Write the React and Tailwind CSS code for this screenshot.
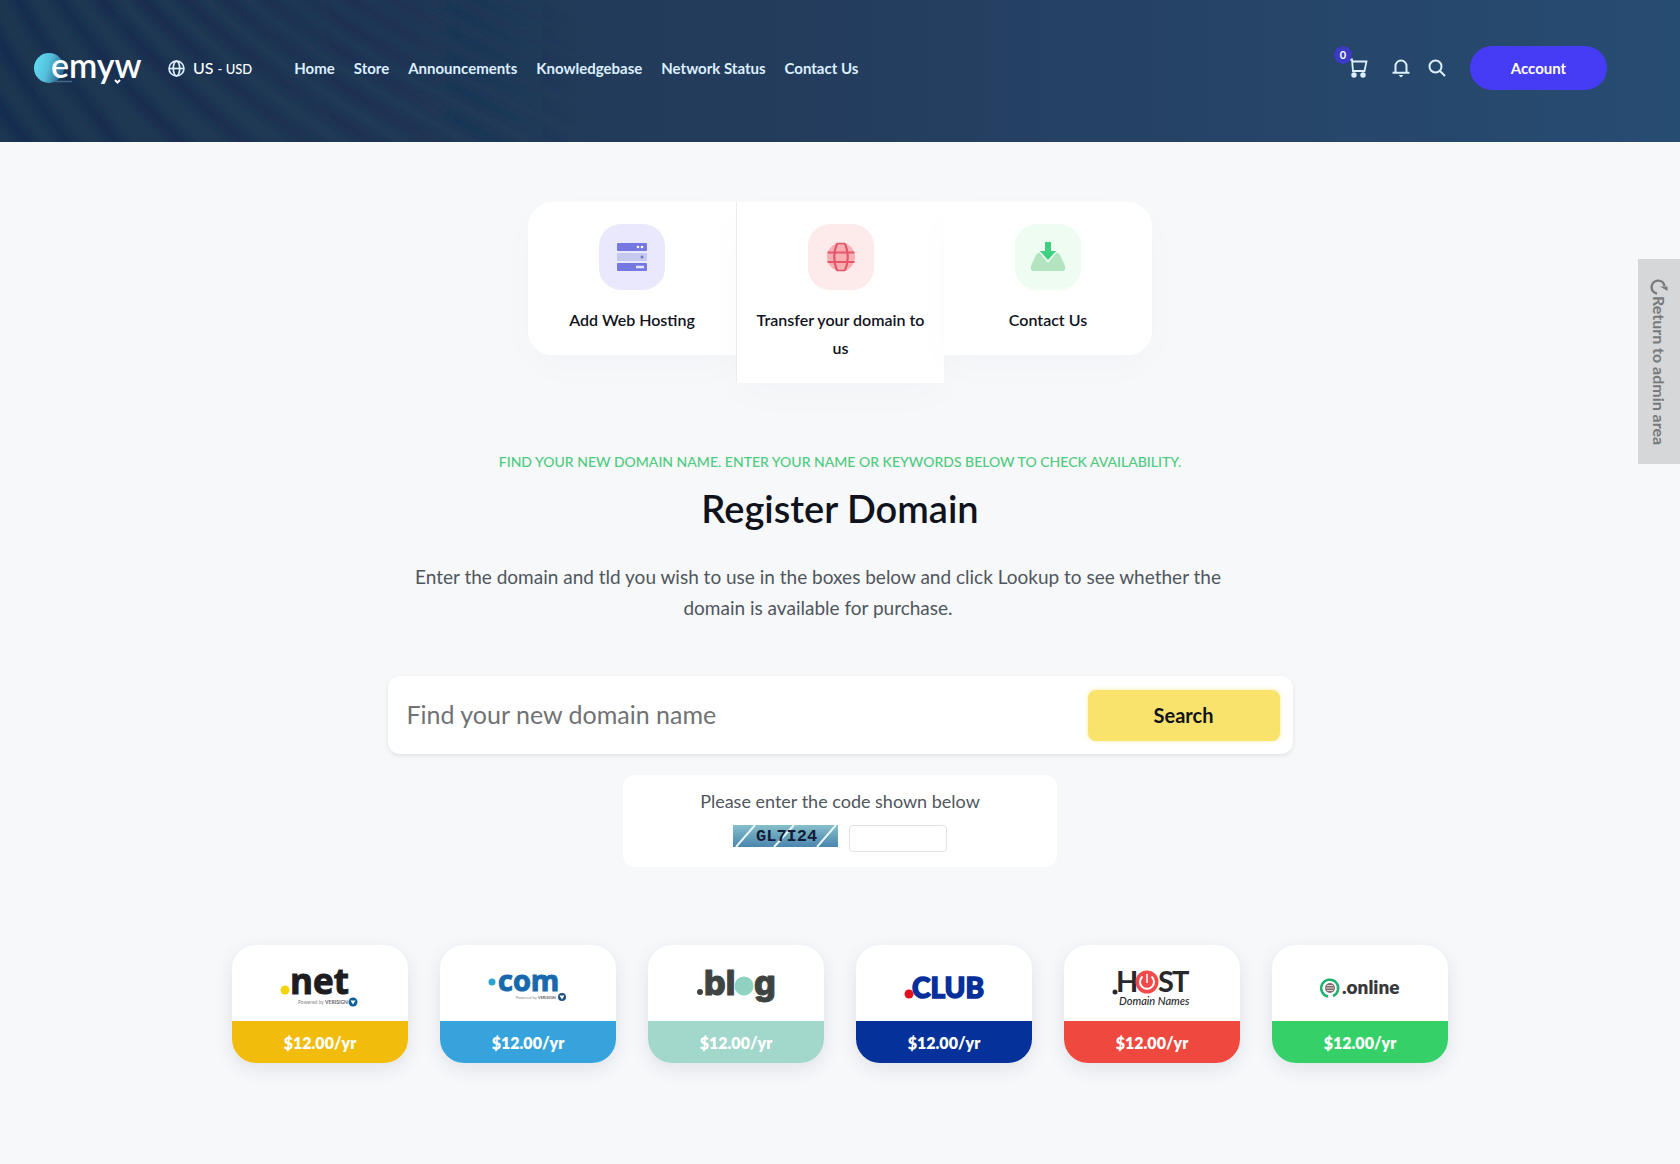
import React from 'react';

const navItems = ['Home', 'Store', 'Announcements', 'Knowledgebase', 'Network Status', 'Contact Us'];

const bands = Array.from({ length: 18 }, (_, i) => {
  const x = -190 + i * 41;
  const run = 100 + Math.max(0, x) * 0.6;
  return `M${x} -6 Q${x + run * 0.42} ${78} ${x + run} 150`;
});

function HeaderBackdrop() {
  return (
    <svg className="absolute inset-0 h-full w-full" aria-hidden="true">
      <defs>
        <linearGradient id="fade" x1="0" x2="580" y1="0" y2="0" gradientUnits="userSpaceOnUse">
          <stop offset="0" stopColor="#12284f" stopOpacity="0.75" />
          <stop offset="0.7" stopColor="#12284f" stopOpacity="0.4" />
          <stop offset="1" stopColor="#12284f" stopOpacity="0" />
        </linearGradient>
        <filter id="soft"><feGaussianBlur stdDeviation="3" /></filter>
      </defs>
      <g filter="url(#soft)" fill="none" stroke="url(#fade)" strokeWidth="13">
        {bands.map((d) => <path key={d} d={d} />)}
      </g>
    </svg>
  );
}

function Logo() {
  return (
    <svg className="block" width="110" height="56" viewBox="0 0 110 56" role="img" aria-label="emyw">
      <defs>
        <linearGradient id="disc" x1="0" x2="1" y1="0" y2="0.3">
          <stop offset="0" stopColor="#62e2f2" />
          <stop offset="0.55" stopColor="#56bfdc" />
          <stop offset="1" stopColor="#2c6f96" />
        </linearGradient>
      </defs>
      <circle cx="15" cy="28" r="15" fill="url(#disc)" />
      <path d="M20 41.500H38" stroke="#47688a" strokeWidth="1.500" />
      <text x="17" y="38" fontFamily="Lato, sans-serif" fontSize="34" fontWeight="600" fill="#fff">emyw</text>
      <path d="M81 40l2.500 2.500 2.500-2.500" fill="none" stroke="#fff" strokeWidth="2" />
    </svg>
  );
}

const line = { fill: 'none', stroke: 'currentColor', strokeWidth: 1.8 };

function GlobeIcon() {
  return (
    <svg width="17" height="17" viewBox="0 0 16 16" aria-hidden="true" {...line} strokeWidth="1.600">
      <circle cx="8" cy="8" r="7" />
      <ellipse cx="8" cy="8" rx="3" ry="7" />
      <path d="M1 8h14" />
    </svg>
  );
}

function CartIcon() {
  return (
    <svg width="18" height="20" viewBox="0 0 18 20" aria-hidden="true" {...line}>
      <path d="M0 1.500h2l1 11.500h11.500L16.500 3.500H2.500" />
      <circle cx="4" cy="17" r="1.800" fill="currentColor" />
      <circle cx="13" cy="17" r="1.800" fill="currentColor" />
    </svg>
  );
}

function BellIcon() {
  return (
    <svg width="18" height="19" viewBox="0 0 18 19" aria-hidden="true" {...line} strokeWidth="2">
      <path d="M0.500 13.800h17M3.500 13.500V7a5.500 5.500 0 0 1 11 0v6.500" />
      <path d="M6.500 16h5l-2.500 2.500z" fill="currentColor" stroke="none" />
    </svg>
  );
}

function SearchIcon() {
  return (
    <svg width="18" height="18" viewBox="0 0 18 18" aria-hidden="true" {...line} strokeWidth="2">
      <circle cx="7.500" cy="7.500" r="6" />
      <path d="M12 12l5 5" />
    </svg>
  );
}

function ServerArt() {
  return (
    <svg width="30" height="28" viewBox="0 0 30 28" aria-hidden="true">
      <rect width="30" height="8" rx="1" fill="#7478e0" />
      <rect y="10" width="30" height="8" rx="1" fill="#c6c9ee" />
      <rect y="20" width="30" height="8" rx="1" fill="#7478e0" />
      <circle cx="21" cy="4" r="1.300" fill="#fff" /><circle cx="25" cy="4" r="1.300" fill="#fff" />
      <circle cx="25" cy="14" r="1.500" fill="#7478c8" />
      <path d="M19 24h8" stroke="#e6e7ff" strokeWidth="2.500" />
    </svg>
  );
}

function GlobeArt() {
  return (
    <svg width="30" height="30" viewBox="0 0 30 30" aria-hidden="true">
      <circle cx="15" cy="15" r="14" fill="#f9aeb2" />
      <g fill="none" stroke="#e5566a" strokeWidth="2.200">
        <path d="M1.500 10.500h27M1.500 20h27" />
        <path d="M11 1.500Q5.500 15 11 28.500M19 1.500Q24.500 15 19 28.500" />
        <path d="M11 1.500h8M11 28.500h8" strokeWidth="1.500" />
      </g>
    </svg>
  );
}

function InboxArt() {
  return (
    <svg width="36" height="30" viewBox="0 0 36 30" aria-hidden="true">
      <path d="M9 11h18q2 0 3 2l5 11q1 5-3 5H4q-4 0-3-5l5-11q1-2 3-2z" fill="#b3e3bf" />
      <path d="M9 10l9 11 9-11z" fill="#e7faec" />
      <path d="M15 0h6v9h5l-8 9-8-9h5z" fill="#3fcf80" />
    </svg>
  );
}

const tiles = [
  { label: 'Add Web Hosting', art: <ServerArt />, icon: 'bg-[#e9e8fd]', box: 'rounded-l-3xl' },
  { label: 'Transfer your domain to us', art: <GlobeArt />, icon: 'bg-[#fdeaea]', box: 'border-l border-[#eeecec]' },
  { label: 'Contact Us', art: <InboxArt />, icon: 'bg-[#eefcf2]', box: 'rounded-r-3xl' },
];

function Verisign({ x, y, r, size, color, start }) {
  return (
    <>
      <text x={start} y={y + 2} fontFamily="Lato, sans-serif" fontSize={size} fill="#8a8a8a">
        Powered by <tspan fontWeight="700" fill="#666">VERISIGN</tspan>
      </text>
      <circle cx={x} cy={y} r={r} fill={color} />
      <path d={`M${x - 2.5} ${y - 1.5}h5l-2.500 4z`} fill="#fff" />
    </>
  );
}

const tlds = [
  {
    name: '.net', bar: 'bg-[#f2bc0c]',
    art: (
      <>
        <circle cx="53" cy="45" r="4.500" fill="#f6d20a" />
        <text x="58" y="49" fontFamily="Open Sans, sans-serif" fontSize="35" fontWeight="700" fill="#1d1d1f" stroke="#1d1d1f">net</text>
        <Verisign start={66} x={121} y={57} r={4.5} size={5} color="#0d5f9c" />
      </>
    ),
  },
  {
    name: '.com', bar: 'bg-[#36a3dc]',
    art: (
      <>
        <circle cx="52" cy="37" r="3.500" fill="#29a5cf" />
        <text x="58" y="46" fontFamily="Open Sans, sans-serif" fontSize="29" fontWeight="700" fill="#1768ad" stroke="#1768ad">com</text>
        <Verisign start={76} x={122} y={52} r={4} size={4} color="#1c4f86" />
      </>
    ),
  },
  {
    name: '.blog', bar: 'bg-[#a1d8cb]',
    art: (
      <>
        <circle cx="52" cy="47" r="3" fill="#3e4442" />
        <g fontFamily="Inter, sans-serif" fontSize="34" fontWeight="800" fill="#3e4442" stroke="#3e4442" strokeLinejoin="round">
          <text x="56" y="50">bl</text>
          <text x="106" y="50">g</text>
        </g>
        <circle cx="96" cy="41" r="9.500" fill="#8fd2c2" />
      </>
    ),
  },
  {
    name: '.club', bar: 'bg-[#04329a]',
    art: (
      <>
        <circle cx="53" cy="49" r="4.500" fill="#e0101c" />
        <text x="56" y="53" fontFamily="Lato, sans-serif" fontSize="28" fontWeight="900" fill="#062f9b" stroke="#062f9b" strokeWidth="1.500">CLUB</text>
      </>
    ),
  },
  {
    name: '.host', bar: 'bg-[#ef483e]',
    art: (
      <>
        <circle cx="51" cy="47" r="2.500" fill="#26282b" />
        <g fontFamily="Lato, sans-serif" fontSize="29" fontWeight="700" fill="#26282b">
          <text x="52" y="47">H</text>
          <text x="94" y="47">S</text>
          <text x="108" y="47">T</text>
        </g>
        <circle cx="83" cy="37" r="11.500" fill="#f04a4a" />
        <path d="M78.500 31.500a7 7 0 1 0 9 0" fill="none" stroke="#fff" strokeWidth="2" />
        <path d="M83 29v9" fill="none" stroke="#fff" strokeWidth="1.500" />
        <text x="55" y="60" fontFamily="Lato, sans-serif" fontSize="11" fontWeight="500" fontStyle="italic" fill="#26282b">Domain Names</text>
      </>
    ),
  },
  {
    name: '.online', bar: 'bg-[#35d168]',
    art: (
      <>
        <path d="M56 51.500a8.500 8.500 0 1 1 5-0.500" fill="none" stroke="#20b070" strokeWidth="2.500" />
        <circle cx="58" cy="43" r="5" fill="#7d706f" />
        <path d="M54 43h8M55 40.500h6M55 45.500h6" stroke="#e2cccc" />
        <text x="70" y="49" fontFamily="Lato, sans-serif" fontSize="19" fontWeight="800" fill="#38383c">.online</text>
      </>
    ),
  },
];

export default function App() {
  return (
    <div className="min-h-screen bg-[#f6f8fa] font-['Lato',sans-serif] text-[#10131c]">
      <header className="relative bg-linear-to-r from-[#1d3650] via-[#243d5e] via-50% to-[#274c72]">
        <HeaderBackdrop />
        <div className="relative flex h-[142px] items-center pr-[73px] pl-[34px] pb-1.5 text-[#dcefff]">
          <a href="#home"><Logo /></a>
          <button type="button" className="ml-6 flex items-center gap-2">
            <GlobeIcon />
            <span className="text-base font-medium text-white">US <span className="text-[13px]">- USD</span></span>
          </button>
          <nav className="ml-[42px] flex gap-[19px] text-[15px] font-bold whitespace-nowrap">
            {navItems.map((item) => <a key={item} href="#nav">{item}</a>)}
          </nav>
          <div className="ml-auto flex items-center">
            <button type="button" aria-label="Cart" className="relative">
              <CartIcon />
              <span className="absolute -top-3 -left-4 flex size-[18px] items-center justify-center rounded-full bg-[#3b3bc4] text-[11px] font-bold text-white">0</span>
            </button>
            <button type="button" aria-label="Notifications" className="ml-6"><BellIcon /></button>
            <button type="button" aria-label="Search site" className="ml-[18px]"><SearchIcon /></button>
            <button type="button" className="ml-6 h-11 w-[137px] rounded-full bg-[#463cf5] text-[15px] font-bold text-white">Account</button>
          </div>
        </div>
      </header>

      <main className="flex flex-col items-center px-8 pt-[60px] pb-[98px]">
        <div className="grid w-full max-w-[624px] grid-cols-3 items-start">
          {tiles.map((t) => (
            <a key={t.label} href="#tile" className={`flex flex-col items-center bg-white px-3 pt-[22px] pb-[21px] text-center shadow-[0_12px_40px_rgba(40,60,90,0.02)] ${t.box}`}>
              <span className={`flex size-[66px] items-center justify-center rounded-[22px] ${t.icon}`}>{t.art}</span>
              <span className="mt-4 text-base leading-7 font-semibold">{t.label}</span>
            </a>
          ))}
        </div>

        <p className="mt-[67px] text-sm leading-6 font-medium text-[#4ecb7e] uppercase">
          Find your new domain name. Enter your name or keywords below to check availability.
        </p>
        <h1 className="mt-[10px] text-[38px] leading-12 font-semibold">Register Domain</h1>
        <p className="mt-[29px] w-full max-w-[906px] pr-11 text-center text-[19px] leading-[31px] text-[#50565c]">
          Enter the domain and tld you wish to use in the boxes below and click Lookup to see whether the domain is available for purchase.
        </p>

        <form className="mt-[53px] flex w-full flex-col items-center" onSubmit={(e) => e.preventDefault()}>
          <div className="flex h-[78px] w-full max-w-[905px] items-center rounded-xl bg-white pr-[13px] pl-[19px] shadow-[0_2px_4px_rgba(40,50,70,0.10)]">
            <input aria-label="Domain name" placeholder="Find your new domain name" className="min-w-0 flex-1 text-[25px] outline-none placeholder:text-[#707274]" />
            <button type="submit" className="h-[51px] w-[192px] rounded-lg bg-[#f9e36c] text-xl font-bold shadow-[0_0_4px_rgba(245,220,60,0.5)]">Search</button>
          </div>
          <div className="mt-[21px] flex h-[92px] w-full max-w-[434px] flex-col items-center rounded-xl bg-white pt-3">
            <label htmlFor="code" className="text-lg leading-7 text-[#50565c]">Please enter the code shown below</label>
            <div className="mt-[10px] flex items-start gap-[11px]">
              <svg width="105" height="22" viewBox="0 0 105 22" role="img" aria-label="GL7I24">
                <defs>
                  <linearGradient id="cap" x1="0" x2="0" y1="0" y2="1">
                    <stop offset="0" stopColor="#86bfca" /><stop offset="1" stopColor="#4a86ae" />
                  </linearGradient>
                </defs>
                <rect width="105" height="22" fill="url(#cap)" />
                <path d="M3 22L22 0M41 22L61 0M84 22L103 0" stroke="#e9f6fa" strokeWidth="2" />
                <text x="23" y="16" fontFamily="Liberation Mono, monospace" fontSize="17" fontWeight="700" fill="#111c38">GL7I24</text>
              </svg>
              <input id="code" className="h-[27px] w-[98px] rounded border border-[#dfe2e6] bg-white px-2 text-sm" />
            </div>
          </div>
        </form>

        <ul className="mt-[78px] grid w-full max-w-[1216px] grid-cols-6 gap-8">
          {tlds.map((t) => (
            <li key={t.name} className="overflow-hidden rounded-3xl bg-white shadow-[0_6px_18px_rgba(40,50,80,0.10)]">
              <div className="flex h-[76px] justify-center">
                <svg width="176" height="76" viewBox="0 0 176 76" className="shrink-0" role="img" aria-label={t.name}>{t.art}</svg>
              </div>
              <p className={`h-[42px] text-center text-base leading-[44px] font-extrabold text-white ${t.bar}`}>$12.00/yr</p>
            </li>
          ))}
        </ul>
      </main>

      <a href="#admin" className="absolute top-[259px] right-0 flex h-[205px] w-[42px] items-center justify-center bg-[#d6d7d8] text-base font-bold text-[#77797b]">
        <span className="flex items-center [writing-mode:vertical-rl]">
          <svg width="18" height="18" viewBox="0 0 18 16" aria-hidden="true">
            <path d="M7 14.500A6.500 6.500 0 1 1 14.500 7" fill="none" stroke="currentColor" strokeWidth="2.400" />
            <path d="M10 7.500h7.500v4.500z" fill="currentColor" />
          </svg>
          Return to admin area
        </span>
      </a>
    </div>
  );
}
